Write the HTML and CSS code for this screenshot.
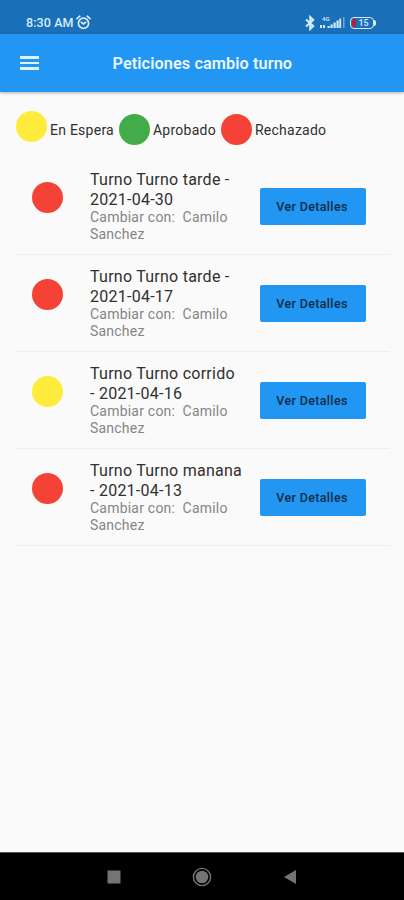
FILE: index.html
```html
<!DOCTYPE html>
<html lang="es">
<head>
  <meta charset="UTF-8">
  <meta name="viewport" content="width=device-width, initial-scale=1.0">
  <title>Peticiones cambio turno</title>
  <link rel="stylesheet" href="styles.css">
</head>
<body>
  <!-- Barra de estado -->
  <div class="status-bar">
    <span class="time">8:30 AM</span>
    <svg class="alarm" width="15" height="15" viewBox="0 0 15 15" fill="none" stroke="currentColor" stroke-width="1.7" stroke-linecap="round">
      <circle cx="7.5" cy="8.2" r="5.1"/>
      <path d="M1 3.6 3.8 1.2M14 3.6 11.2 1.2M5.3 7.3l2.2 1.6 2.2-1.6"/>
    </svg>
    <div class="status-icons">
      <svg width="10" height="16" viewBox="0 0 10 16" fill="none" stroke="currentColor" stroke-width="2">
        <path d="M1 4.500 8.300 11 5.200 14V2L8.300 5 1 11.500"/>
      </svg>
      <div class="signal">
        <span class="network">4G</span>
        <svg width="25" height="13" viewBox="0 0 25 13" fill="currentColor">
          <path d="M0 9h2v3H0zM3 9h2v3H3zM7.500 10h2.200v2H7.500zM10.500 8.500h2.200V12h-2.200zM13.500 6.500h2.200V12h-2.200zM16.500 4.500h2.200V12h-2.200zM19.300 2.500h1.800V12h-1.800z"/>
          <path opacity=".45" d="M23 1h1.500v11H23z"/>
        </svg>
      </div>
      <div class="battery"><span class="charge"></span>15</div>
    </div>
  </div>

  <!-- Cabecera -->
  <header class="app-bar">
    <button class="menu" aria-label="Menú"><span></span><span></span><span></span></button>
    <h1>Peticiones cambio turno</h1>
  </header>

  <main class="content">
    <div class="legend">
      <span class="dot yellow raised"></span><span class="legend-text">En Espera</span>
      <span class="dot green"></span><span class="legend-text">Aprobado</span>
      <span class="dot red"></span><span class="legend-text">Rechazado</span>
    </div>

    <!-- Lista de peticiones -->
    <ul class="requests">
      <li class="request">
        <span class="dot red"></span>
        <div class="info">
          <p class="title">Turno Turno tarde -<br>2021-04-30</p>
          <p class="subtitle">Cambiar con:&nbsp; Camilo<br>Sanchez</p>
        </div>
        <button class="button">Ver Detalles</button>
      </li>
      <li class="request">
        <span class="dot red"></span>
        <div class="info">
          <p class="title">Turno Turno tarde -<br>2021-04-17</p>
          <p class="subtitle">Cambiar con:&nbsp; Camilo<br>Sanchez</p>
        </div>
        <button class="button">Ver Detalles</button>
      </li>
      <li class="request">
        <span class="dot yellow"></span>
        <div class="info">
          <p class="title">Turno Turno corrido<br>- 2021-04-16</p>
          <p class="subtitle">Cambiar con:&nbsp; Camilo<br>Sanchez</p>
        </div>
        <button class="button">Ver Detalles</button>
      </li>
      <li class="request">
        <span class="dot red"></span>
        <div class="info">
          <p class="title">Turno Turno manana<br>- 2021-04-13</p>
          <p class="subtitle">Cambiar con:&nbsp; Camilo<br>Sanchez</p>
        </div>
        <button class="button">Ver Detalles</button>
      </li>
    </ul>
  </main>

  <!-- Botones de navegación -->
  <nav class="nav-bar">
    <svg width="14" height="14" viewBox="0 0 14 14" fill="currentColor"><rect x=".5" y=".5" width="13" height="13" rx=".5"/></svg>
    <svg width="20" height="20" viewBox="0 0 20 20"><circle cx="10" cy="10" r="8.600" fill="none" stroke="currentColor" stroke-width="1.400"/><circle cx="10" cy="10" r="6.300" fill="currentColor"/></svg>
    <svg width="14" height="16" viewBox="0 0 14 16" fill="currentColor"><path d="M1 8 13 1v14z"/></svg>
  </nav>
</body>
</html>
```
FILE: styles.css
```css
* {
  box-sizing: border-box;
}

body {
  margin: 0;
  height: 900px;
  display: flex;
  flex-direction: column;
  background: #fafafa;
  color: #303030;
  font-family: Roboto, "Liberation Sans", sans-serif;
}

/* Barra de estado */
.status-bar {
  height: 34px;
  padding: 11px 28px 0 26px;
  display: flex;
  align-items: center;
  background: #1a70b8;
  color: #d5ecfb;
}

.time {
  font-size: 12.5px;
  font-weight: 500;
  letter-spacing: 0.1px;
}

.alarm {
  margin-left: 2px;
}

.status-icons {
  margin-left: auto;
  display: flex;
  align-items: center;
}

.signal {
  position: relative;
  display: flex;
  margin: 0 5px 0 5px;
}

.network {
  position: absolute;
  left: 2px;
  top: -1px;
  font-size: 6px;
  line-height: 7px;
  font-weight: 500;
}

.battery {
  position: relative;
  width: 24px;
  height: 12px;
  margin-right: 2px;
  padding-left: 3px;
  border: 1.5px solid #d5ecfb;
  border-radius: 4px;
  font-size: 9px;
  font-weight: 500;
  line-height: 10px;
  text-align: center;
}

.battery::after {
  content: "";
  position: absolute;
  right: -3px;
  top: 2px;
  width: 2px;
  height: 6px;
  border-radius: 0 2px 2px 0;
  background: #d5ecfb;
}

.charge {
  position: absolute;
  left: 1px;
  top: 1px;
  width: 4px;
  height: 8px;
  border-radius: 1px;
  background: #b8203a;
}

/* Cabecera */
.app-bar {
  position: relative;
  height: 58px;
  padding-left: 20px;
  display: flex;
  align-items: center;
  background: #2196f3;
  color: #e9f6fe;
  box-shadow: 0 1px 3px rgba(0, 0, 0, 0.3);
}

.menu {
  width: 19px;
  padding: 0;
  border: none;
  background: none;
  display: flex;
  flex-direction: column;
  gap: 3px;
}

.menu span {
  height: 2.5px;
  background: #e0f2fe;
}

h1 {
  margin: 0 0 0 73.5px;
  font-size: 16.3px;
  font-weight: 600;
  letter-spacing: 0.08px;
}

/* Leyenda */
.content {
  flex: 1;
  padding: 19px 14px 0 16px;
}

.legend {
  display: flex;
  align-items: center;
  height: 37px;
}

.dot {
  flex: none;
  width: 31px;
  height: 31px;
  border-radius: 50%;
}

.raised {
  margin-bottom: 6px;
}

.yellow {
  background: #ffeb3b;
}

.green {
  background: #41ac49;
}

.red {
  background: #f44336;
}

.legend-text {
  margin: 0 5px 0 3px;
  font-size: 14px;
  letter-spacing: 0.25px;
}

/* Peticiones */
.requests {
  margin: 10px 0 0;
  padding: 0;
  list-style: none;
}

.request {
  height: 97px;
  padding: 12px 24px 0 16px;
  display: flex;
  border-bottom: 1px solid #eeeeee;
}

.request .dot {
  margin-top: 12px;
}

.info {
  width: 170px;
  padding-left: 27px;
  white-space: nowrap;
}

.title {
  margin: 0;
  font-size: 16px;
  line-height: 20px;
  letter-spacing: 0.25px;
}

.subtitle {
  margin: -1px 0 0;
  color: #858585;
  font-size: 14px;
  line-height: 16.5px;
  letter-spacing: 0.22px;
}

.button {
  width: 106px;
  height: 37px;
  margin: 18px 0 0 26.5px;
  padding: 0 1px 0 0;
  border: none;
  border-radius: 2px;
  background: #2196f3;
  color: #102c44;
  font-family: inherit;
  font-size: 12.5px;
  font-weight: 500;
  letter-spacing: 0.35px;
}

/* Navegación */
.nav-bar {
  height: 48px;
  padding: 0 107px;
  display: flex;
  align-items: center;
  justify-content: space-between;
  border-top: 1px solid #555;
  background: #000;
  color: #747474;
}
```
